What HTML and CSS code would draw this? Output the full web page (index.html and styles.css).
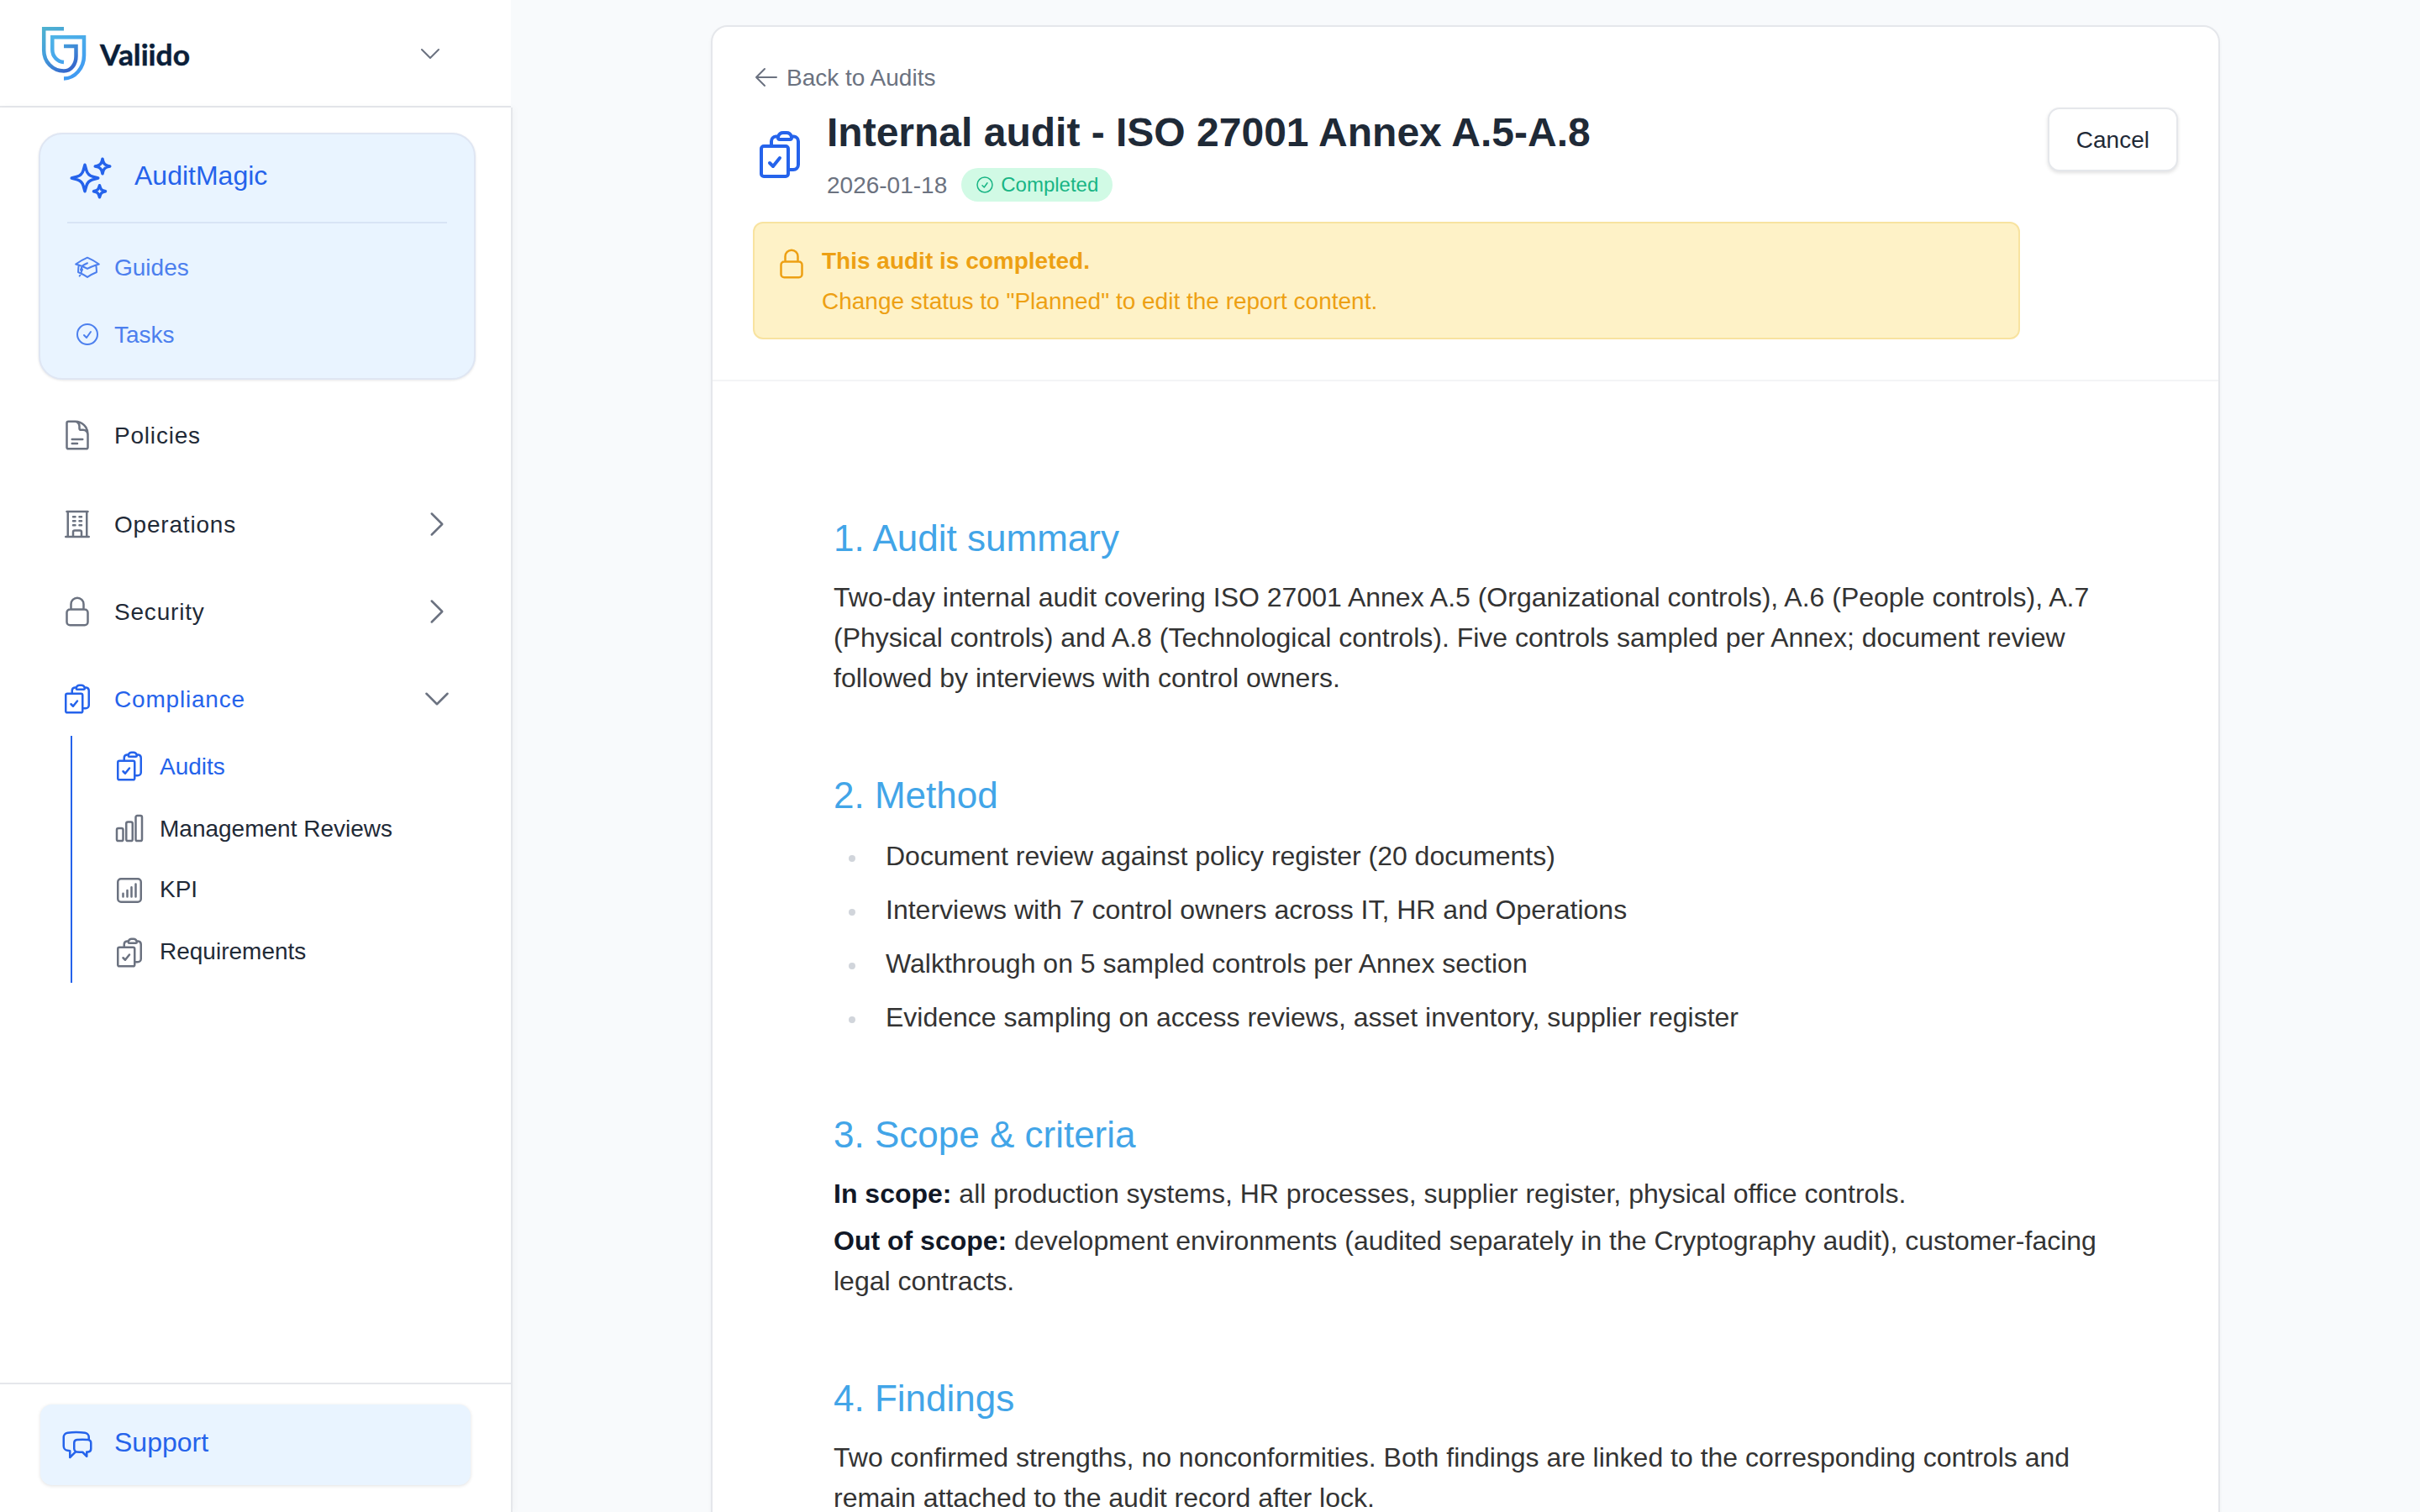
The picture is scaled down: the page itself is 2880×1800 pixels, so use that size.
FILE: index.html
```html
<!DOCTYPE html>
<html lang="en">
<head>
    <meta charset="UTF-8">
    <meta name="viewport" content="width=device-width, initial-scale=1.0">
    <title>Valiido - Internal audit</title>
    <link rel="stylesheet" href="styles.css">
</head>
<body>
    <!-- Shared icons -->
    <svg class="sprite" width="0" height="0">
        <symbol id="clipboard" viewBox="0 0 24 24">
            <path d="M11.35 3.836c-.065.21-.1.433-.1.664 0 .414.336.75.75.75h4.5a.75.75 0 0 0 .75-.75 2.25 2.25 0 0 0-.1-.664m-5.8 0A2.251 2.251 0 0 1 13.5 2.25H15c1.012 0 1.867.668 2.15 1.586m-5.8 0c-.376.023-.75.05-1.124.08C9.095 4.01 8.25 4.973 8.25 6.108V8.25m8.9-4.414c.376.023.75.05 1.124.08 1.131.094 1.976 1.057 1.976 2.192V16.5A2.25 2.25 0 0 1 18 18.75h-2.25m-7.5-10.5H4.875c-.621 0-1.125.504-1.125 1.125v11.25c0 .621.504 1.125 1.125 1.125h9.75c.621 0 1.125-.504 1.125-1.125V18.75m-7.5-10.5h6.375c.621 0 1.125.504 1.125 1.125v9.375m-8.25-3 1.5 1.5 3-3.75"/>
        </symbol>
        <symbol id="lock" viewBox="0 0 24 24">
            <path d="M16.5 10.5V6.75a4.5 4.5 0 1 0-9 0v3.75m-.75 11.25h10.5a2.25 2.25 0 0 0 2.25-2.25v-6.75a2.25 2.25 0 0 0-2.25-2.25H6.75a2.25 2.25 0 0 0-2.25 2.25v6.75a2.25 2.25 0 0 0 2.25 2.25Z"/>
        </symbol>
        <symbol id="check-circle" viewBox="0 0 24 24">
            <path d="M9 12.75 11.25 15 15 9.75M21 12a9 9 0 1 1-18 0 9 9 0 0 1 18 0Z"/>
        </symbol>
        <symbol id="chevron-right" viewBox="0 0 24 24">
            <path d="m8.25 4.5 7.5 7.5-7.5 7.5"/>
        </symbol>
        <symbol id="chevron-down" viewBox="0 0 24 24">
            <path d="m19.5 8.25-7.5 7.5-7.5-7.5"/>
        </symbol>
    </svg>

    <div class="layout">
        <aside class="sidebar">
            <div class="brand">
                <svg class="brand-logo" viewBox="0 0 180 80">
                    <defs>
                        <linearGradient id="outer" gradientUnits="userSpaceOnUse" x1="2" y1="8" x2="36" y2="58">
                            <stop offset="0" stop-color="#4fb3cf"/>
                            <stop offset=".5" stop-color="#459fdc"/>
                            <stop offset="1" stop-color="#3568cc"/>
                        </linearGradient>
                        <linearGradient id="inner" gradientUnits="userSpaceOnUse" x1="14" y1="18" x2="40" y2="72">
                            <stop offset="0" stop-color="#4fb4e6"/>
                            <stop offset="1" stop-color="#3f98f3"/>
                        </linearGradient>
                    </defs>
                    <g fill="none" stroke-width="4.5">
                        <path stroke="url(#outer)" d="M28 10.200H4.200V36C4.200 49.500 14.500 60.500 28 60.500C37 60.500 42.500 52 42.500 43V31H28"/>
                        <path stroke="url(#inner)" d="M28 50C20.500 49.500 14.300 43.500 14.300 35V20.200H52V42C52 57 41 69.500 28 69.500"/>
                    </g>
                    <text class="brand-name" x="71" y="53.5" textLength="107" lengthAdjust="spacingAndGlyphs">Valiido</text>
                </svg>
                <svg class="icon icon-sm"><use href="#chevron-down"/></svg>
            </div>

            <div class="sidebar-body">
                <nav class="menu">
                    <div class="magic">
                        <a class="magic-title">
                            <svg class="icon icon-magic" viewBox="0 0 24 24"><path d="M9.813 15.904 9 18.750l-.813-2.846a4.500 4.500 0 0 0-3.090-3.090L2.250 12l2.846-.813a4.500 4.500 0 0 0 3.090-3.090L9 5.250l.813 2.846a4.500 4.500 0 0 0 3.090 3.090L15.750 12l-2.846.813a4.500 4.500 0 0 0-3.090 3.090ZM18.259 8.715 18 9.750l-.259-1.035a3.375 3.375 0 0 0-2.455-2.456L14.250 6l1.036-.259a3.375 3.375 0 0 0 2.455-2.456L18 2.250l.259 1.035a3.375 3.375 0 0 0 2.456 2.456L21.750 6l-1.035.259a3.375 3.375 0 0 0-2.456 2.456ZM16.894 20.567 16.500 21.750l-.394-1.183a2.250 2.250 0 0 0-1.423-1.423L13.500 18.750l1.183-.394a2.250 2.250 0 0 0 1.423-1.423l.394-1.183.394 1.183a2.250 2.250 0 0 0 1.423 1.423l1.183.394-1.183.394a2.250 2.250 0 0 0-1.423 1.423Z"/></svg>
                            <span>AuditMagic</span>
                        </a>
                        <a class="magic-link">
                            <svg class="icon icon-sm" viewBox="0 0 24 24"><path d="M4.260 10.147a60.438 60.438 0 0 0-.491 6.347A48.620 48.620 0 0 1 12 20.904a48.620 48.620 0 0 1 8.232-4.410 60.460 60.460 0 0 0-.491-6.347m-15.482 0a50.636 50.636 0 0 0-2.658-.813A59.906 59.906 0 0 1 12 3.493a59.903 59.903 0 0 1 10.399 5.840c-.896.248-1.783.520-2.658.814m-15.482 0A50.717 50.717 0 0 1 12 13.489a50.702 50.702 0 0 1 7.740-3.342M6.750 15a.750.750 0 1 0 0-1.500.750.750 0 0 0 0 1.500Zm0 0v-3.675A55.378 55.378 0 0 1 12 8.443m-7.007 11.550A5.981 5.981 0 0 0 6.750 15.750v-1.500"/></svg>
                            <span>Guides</span>
                        </a>
                        <a class="magic-link">
                            <svg class="icon icon-sm"><use href="#check-circle"/></svg>
                            <span>Tasks</span>
                        </a>
                    </div>

                    <a class="menu-item">
                        <svg class="icon" viewBox="0 0 24 24"><path d="M19.500 14.250v-2.625a3.375 3.375 0 0 0-3.375-3.375h-1.500A1.125 1.125 0 0 1 13.500 7.125v-1.500a3.375 3.375 0 0 0-3.375-3.375H8.250m0 12.750h7.500m-7.500 3H12M10.500 2.250H5.625c-.621 0-1.125.504-1.125 1.125v17.250c0 .621.504 1.125 1.125 1.125h12.750c.621 0 1.125-.504 1.125-1.125V11.250a9 9 0 0 0-9-9Z"/></svg>
                        <span>Policies</span>
                    </a>
                    <a class="menu-item">
                        <svg class="icon" viewBox="0 0 24 24"><path d="M3.750 21h16.500M4.500 3h15M5.250 3v18m13.500-18v18M9 6.750h1.500m-1.500 3h1.500m-1.500 3h1.500m3-6H15m-1.500 3H15m-1.500 3H15M9 21v-3.375c0-.621.504-1.125 1.125-1.125h3.750c.621 0 1.125.504 1.125 1.125V21"/></svg>
                        <span>Operations</span>
                        <svg class="icon"><use href="#chevron-right"/></svg>
                    </a>
                    <a class="menu-item">
                        <svg class="icon"><use href="#lock"/></svg>
                        <span>Security</span>
                        <svg class="icon"><use href="#chevron-right"/></svg>
                    </a>
                    <a class="menu-item active">
                        <svg class="icon"><use href="#clipboard"/></svg>
                        <span>Compliance</span>
                        <svg class="icon arrow"><use href="#chevron-down"/></svg>
                    </a>
                    <div class="submenu">
                        <a class="submenu-item active">
                            <svg class="icon"><use href="#clipboard"/></svg>
                            <span>Audits</span>
                        </a>
                        <a class="submenu-item">
                            <svg class="icon" viewBox="0 0 24 24"><path d="M3 13.125C3 12.504 3.504 12 4.125 12h2.250c.621 0 1.125.504 1.125 1.125v6.750C7.500 20.496 6.996 21 6.375 21h-2.250A1.125 1.125 0 0 1 3 19.875v-6.750ZM9.750 8.625c0-.621.504-1.125 1.125-1.125h2.250c.621 0 1.125.504 1.125 1.125v11.250c0 .621-.504 1.125-1.125 1.125h-2.250a1.125 1.125 0 0 1-1.125-1.125V8.625ZM16.500 4.125c0-.621.504-1.125 1.125-1.125h2.250C20.496 3 21 3.504 21 4.125v15.750c0 .621-.504 1.125-1.125 1.125h-2.250a1.125 1.125 0 0 1-1.125-1.125V4.125Z"/></svg>
                            <span>Management Reviews</span>
                        </a>
                        <a class="submenu-item">
                            <svg class="icon" viewBox="0 0 24 24"><path d="M7.500 14.250v2.250m3-4.500v4.500m3-6.750v6.750m3-9v9M6 20.250h12A2.250 2.250 0 0 0 20.250 18V6A2.250 2.250 0 0 0 18 3.750H6A2.250 2.250 0 0 0 3.750 6v12A2.250 2.250 0 0 0 6 20.250Z"/></svg>
                            <span>KPI</span>
                        </a>
                        <a class="submenu-item">
                            <svg class="icon"><use href="#clipboard"/></svg>
                            <span>Requirements</span>
                        </a>
                    </div>
                </nav>

                <div class="sidebar-footer">
                    <a class="support">
                        <svg class="icon" viewBox="0 0 24 24"><path d="M20.250 8.511c.884.284 1.500 1.128 1.500 2.097v4.286c0 1.136-.847 2.100-1.980 2.193-.340.027-.680.052-1.020.072v3.091l-3-3c-1.354 0-2.694-.055-4.020-.163a2.115 2.115 0 0 1-.825-.242m9.345-8.334a2.126 2.126 0 0 0-.476-.095 48.640 48.640 0 0 0-8.048 0c-1.131.094-1.976 1.057-1.976 2.192v4.286c0 .837.460 1.580 1.155 1.951m9.345-8.334V6.637c0-1.621-1.152-3.026-2.760-3.235A48.455 48.455 0 0 0 11.250 3c-2.115 0-4.198.137-6.240.402-1.608.209-2.760 1.614-2.760 3.235v6.226c0 1.621 1.152 3.026 2.760 3.235.577.075 1.157.140 1.740.194V21l4.155-4.155"/></svg>
                        <span>Support</span>
                    </a>
                </div>
            </div>
        </aside>

        <main class="content">
            <div class="card">
                <header class="card-header">
                    <div class="header-main">
                        <a class="back">
                            <svg class="icon icon-sm" viewBox="0 0 24 24"><path d="M10.500 19.500 3 12m0 0 7.500-7.500M3 12h18"/></svg>
                            <span>Back to Audits</span>
                        </a>
                        <div class="title-row">
                            <svg class="icon icon-title"><use href="#clipboard"/></svg>
                            <div>
                                <h1>Internal audit - ISO 27001 Annex A.5-A.8</h1>
                                <div class="meta">
                                    <span class="date">2026-01-18</span>
                                    <span class="badge">
                                        <svg class="icon icon-xs"><use href="#check-circle"/></svg>
                                        Completed
                                    </span>
                                </div>
                            </div>
                        </div>
                        <div class="notice">
                            <svg class="icon"><use href="#lock"/></svg>
                            <div>
                                <p class="notice-title">This audit is completed.</p>
                                <p class="notice-text">Change status to "Planned" to edit the report content.</p>
                            </div>
                        </div>
                    </div>
                    <button class="cancel">Cancel</button>
                </header>

                <article class="report">
                    <h2>1. Audit summary</h2>
                    <p>Two-day internal audit covering ISO 27001 Annex A.5 (Organizational controls), A.6 (People controls), A.7 (Physical controls) and A.8 (Technological controls). Five controls sampled per Annex; document review followed by interviews with control owners.</p>

                    <h2>2. Method</h2>
                    <ul>
                        <li>Document review against policy register (20 documents)</li>
                        <li>Interviews with 7 control owners across IT, HR and Operations</li>
                        <li>Walkthrough on 5 sampled controls per Annex section</li>
                        <li>Evidence sampling on access reviews, asset inventory, supplier register</li>
                    </ul>

                    <h2>3. Scope &amp; criteria</h2>
                    <p><strong>In scope:</strong> all production systems, HR processes, supplier register, physical office controls.</p>
                    <p><strong>Out of scope:</strong> development environments (audited separately in the Cryptography audit), customer-facing legal contracts.</p>

                    <h2>4. Findings</h2>
                    <p>Two confirmed strengths, no nonconformities. Both findings are linked to the corresponding controls and remain attached to the audit record after lock.</p>
                </article>
            </div>
        </main>
    </div>
</body>
</html>
```

FILE: styles.css
```css
* {
    box-sizing: border-box;
}
body {
    margin: 0;
    font-family: "Liberation Sans", Arial, sans-serif;
    font-size: 28px;
    line-height: 40px;
    color: #1f2a37;
    background: #f8fafc;
}
h1, h2, p, ul {
    margin: 0;
    padding: 0;
}
.sprite {
    position: absolute;
}
.layout {
    display: flex;
    height: 1800px;
    overflow: hidden;
}

/* Icons */
.icon {
    width: 40px;
    height: 40px;
    flex-shrink: 0;
    fill: none;
    stroke: currentColor;
    stroke-width: 1.5;
    stroke-linecap: round;
    stroke-linejoin: round;
}
.icon-xs {
    width: 24px;
    height: 24px;
}
.icon-sm {
    width: 32px;
    height: 32px;
}
.icon-magic {
    width: 56px;
    height: 56px;
}
.icon-title {
    width: 64px;
    height: 64px;
    color: #2563eb;
}

/* Sidebar */
.sidebar {
    width: 610px;
    flex-shrink: 0;
    display: flex;
    flex-direction: column;
}
.brand {
    width: 608px;
    height: 128px;
    padding: 2px 80px 0 48px;
    display: flex;
    align-items: center;
    justify-content: space-between;
    background: white;
    border-bottom: 2px solid #e5e7eb;
    color: #6b7280;
}
.brand-logo {
    width: 180px;
    height: 80px;
}
.brand-name {
    font-family: Lato, sans-serif;
    font-size: 35px;
    font-weight: 700;
    fill: #0b1f3a;
    stroke: #0b1f3a;
    stroke-width: 0.5;
}
.sidebar-body {
    flex: 1;
    display: flex;
    flex-direction: column;
    background: white;
    border-right: 2px solid #e5e7eb;
    box-shadow: 2px 0 8px rgba(0, 0, 0, 0.03);
}
.menu {
    flex: 1;
    padding: 30px 42px 0 46px;
}
.magic {
    height: 294px;
    padding: 0 32px;
    background: #e9f4ff;
    border: 2px solid #dfe6f3;
    border-radius: 28px;
    box-shadow: 0 1px 3px rgba(0, 0, 0, 0.1);
    color: #2563eb;
}
.magic-title {
    height: 106px;
    margin-bottom: 12px;
    display: flex;
    align-items: center;
    gap: 24px;
    font-size: 32px;
    border-bottom: 2px solid #d8e4f5;
}
.magic-title span, .support span {
    padding-bottom: 6px;
}
.magic-link {
    height: 80px;
    padding-left: 8px;
    display: flex;
    align-items: center;
    gap: 16px;
    opacity: 0.8;
}
.magic-link span, .menu-item span, .submenu-item span {
    padding-top: 2px;
}
.menu-item {
    height: 104px;
    padding: 0 26px;
    display: flex;
    align-items: center;
    gap: 24px;
    letter-spacing: 0.8px;
}
.magic + .menu-item {
    height: 108px;
    margin-top: 12px;
}
.menu-item span {
    flex: 1;
}
.menu-item .icon, .submenu-item .icon {
    color: #6b7280;
}
.menu-item.active, .submenu-item.active,
.menu-item.active .icon, .submenu-item.active .icon {
    color: #2563eb;
}
.menu-item.active .arrow {
    color: #6b7280;
}
.submenu {
    display: flex;
    flex-direction: column;
    gap: 2px;
    margin: -8px 0 0 38px;
    border-left: 2px solid #2563eb;
}
.submenu-item {
    height: 72px;
    padding-left: 48px;
    display: flex;
    align-items: center;
    gap: 16px;
}
.submenu-item:nth-child(n+3) span {
    padding: 0 0 2px;
}
.sidebar-footer {
    height: 154px;
    padding: 24px 48px 0 48px;
    border-top: 2px solid #e5e7eb;
}
.support {
    height: 96px;
    padding-left: 24px;
    display: flex;
    align-items: center;
    gap: 24px;
    font-size: 32px;
    color: #2563eb;
    background: #e9f4ff;
    border-radius: 14px;
    box-shadow: 0 1px 4px rgba(0, 0, 0, 0.12);
}

/* Audit card */
.content {
    flex: 1;
    padding: 30px 238px 0 236px;
}
.card {
    background: white;
    border: 2px solid #e5e7eb;
    border-radius: 20px;
    box-shadow: 0 2px 4px rgba(0, 0, 0, 0.04);
}
.card-header {
    padding: 40px 48px 48px;
    display: flex;
    align-items: flex-start;
    gap: 33px;
    border-bottom: 2px solid #f3f4f6;
}
.header-main {
    flex: 1;
}
.back {
    height: 40px;
    display: flex;
    gap: 8px;
    margin-bottom: 16px;
    line-height: 42px;
    color: #6b7280;
}
.back .icon {
    margin-top: 4px;
}
.title-row {
    display: flex;
    align-items: center;
    gap: 24px;
}
h1 {
    font-size: 48px;
    line-height: 60px;
    margin-bottom: 12px;
}
.meta {
    height: 40px;
    display: flex;
    gap: 17px;
    color: #6b7280;
}
.date {
    line-height: 42px;
}
.badge {
    display: flex;
    align-items: center;
    gap: 7px;
    padding: 0 17px 0 16px;
    font-size: 24px;
    color: #19b585;
    background: #d1fae5;
    border-radius: 20px;
}
.notice {
    display: flex;
    gap: 16px;
    margin-top: 24px;
    padding: 24px;
    line-height: 42px;
    color: #eda013;
    background: #fef2c7;
    border: 2px solid #f8e3a0;
    border-radius: 12px;
}
.notice .icon {
    margin-top: 4px;
}
.notice p {
    height: 40px;
}
.notice-title {
    font-weight: bold;
}
.notice .notice-text {
    margin-top: 8px;
}
.cancel {
    height: 76px;
    margin-top: 56px;
    padding: 2px 32px 0;
    font: inherit;
    line-height: 42px;
    color: #1f2a37;
    background: white;
    border: 2px solid #e5e7eb;
    border-radius: 14px;
    box-shadow: 0 2px 4px rgba(0, 0, 0, 0.12);
}

/* Report */
.report {
    padding: 159px 144px 100px;
    font-size: 32px;
    line-height: 48px;
    color: #333333;
}
.report h2 {
    margin: 88px 0 18px;
    font-size: 44px;
    line-height: 56px;
    font-weight: normal;
    color: #42a5e8;
}
.report h2:first-child {
    margin-top: 0;
}
.report p + p {
    margin-top: 8px;
}
.report strong {
    color: #111827;
}
.report ul {
    padding-top: 2px;
    list-style: none;
}
.report li {
    display: flex;
    align-items: center;
    gap: 36px;
    padding-left: 18px;
}
.report li + li {
    margin-top: 16px;
}
.report li::before {
    content: "";
    width: 8px;
    height: 8px;
    margin-top: 6px;
    border-radius: 50%;
    background: #d1d5db;
}
```
